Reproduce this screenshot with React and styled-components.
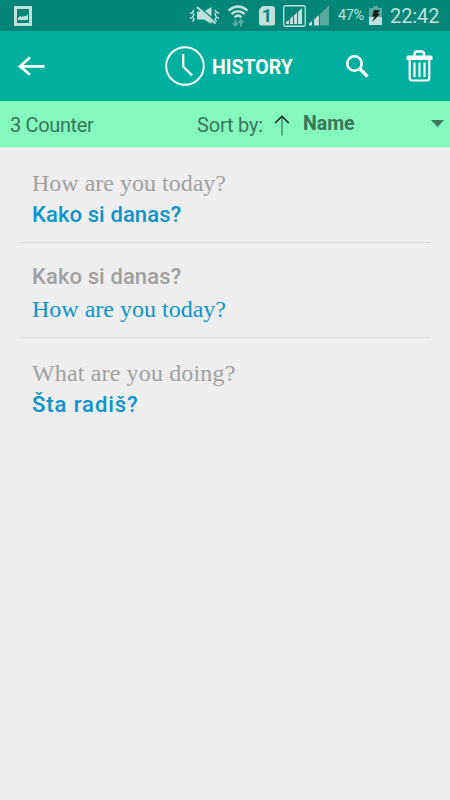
import React from 'react';
import styled, { createGlobalStyle } from 'styled-components';

const GlobalStyle = createGlobalStyle`
  * {
    box-sizing: border-box;
  }

  body {
    margin: 0;
    background-color: #eeeeee;
    font-family: Roboto, sans-serif;
  }
`;

const AppContainer = styled.div`
  display: flex;
  flex-direction: column;
  height: 800px;
  overflow: hidden;
  background-color: #eeeeee;
`;

const StatusBar = styled.div`
  display: flex;
  justify-content: space-between;
  height: 31px;
  padding: 0 10px 0 14px;
  background-color: #048577;
  color: #bfe0dc;
`;

const StatusGroup = styled.div`
  display: flex;
  align-items: center;
`;

const StatusIcon = styled.svg`
  display: block;
  flex: none;
  margin-right: ${props => props.$gap || 0}px;
`;

const Battery = styled.span`
  width: 28px;
  margin-right: 3px;
  font-size: 14.5px;
  letter-spacing: -0.35px;
  white-space: nowrap;
`;

const Clock = styled.span`
  width: 50px;
  font-size: 20px;
  letter-spacing: -0.1px;
  white-space: nowrap;
`;

const Toolbar = styled.header`
  display: flex;
  align-items: center;
  height: 70px;
  padding: 0 17px 0 18px;
  background-color: #00b09f;
`;

const ToolbarTitle = styled.div`
  display: flex;
  align-items: center;
  margin-left: 120px;
`;

const Title = styled.h1`
  width: 84px;
  margin: 2px 0 0 7px;
  color: white;
  font-size: 19.5px;
  font-weight: 700;
  white-space: nowrap;
`;

const ToolbarActions = styled.div`
  display: flex;
  align-items: center;
  margin-left: auto;
`;

const IconButton = styled.button`
  display: block;
  margin: 0 0 0 ${props => props.$gap || 0}px;
  padding: 0;
  border: none;
  background: none;
  color: white;

  svg {
    display: block;
  }
`;

const SortBar = styled.div`
  display: flex;
  align-items: center;
  height: 47px;
  padding: 2px 6px 0 10px;
  border-bottom: 1px solid #c4f2d9;
  background-color: #84f9be;
  color: #3a7658;
  font-size: 20px;
`;

const Counter = styled.span`
  width: 187px;
  letter-spacing: -0.35px;
`;

const SortLabel = styled.span`
  width: 77px;
  letter-spacing: -0.2px;
  white-space: nowrap;
`;

const SortSelect = styled.div`
  display: flex;
  flex: 1;
  align-items: center;
  justify-content: space-between;
  margin: -3px 0 0 13px;
  font-size: 19.5px;
  font-weight: 700;
`;

const List = styled.ul`
  margin: 0;
  padding: 0 20px;
  list-style: none;
`;

const Entry = styled.li`
  height: 95px;
  padding: ${props => props.$top}px 12px 0;
  border-bottom: 1px solid #dadada;

  &:last-child {
    border-bottom: none;
  }
`;

const Phrase = styled.div`
  color: ${props => (props.$translated ? '#0b94cb' : '#a0a0a0')};
  font-family: 'Liberation Serif', serif;
  font-size: 24px;
  line-height: 31px;
  letter-spacing: ${props => props.$spacing || 0}px;
  white-space: nowrap;
`;

const RoundPhrase = styled(Phrase)`
  font-family: Roboto, sans-serif;
  font-size: 22px;
  font-weight: 500;
  line-height: 32px;
  padding-bottom: 1px;
`;

const history = [
  { source: 'How are you today?', target: 'Kako si danas?', top: 20, targetSpacing: 0.1 },
  { source: 'Kako si danas?', target: 'How are you today?', reversed: true, top: 18, sourceSpacing: 0.1 },
  { source: 'What are you doing?', target: 'Šta radiš?', top: 20, sourceSpacing: 0.15, targetSpacing: 0.95 },
];

function PictureIcon() {
  return (
    <StatusIcon width="18" height="20" viewBox="0 0 18 20">
      <path fill="currentColor" fillRule="evenodd" d="M0 0h18v20H0zM3 3v14h12V3z" />
      <path fill="currentColor" d="M4 14v-2l2-2 2 1 2-1 2 0 2-2v6z" />
    </StatusIcon>
  );
}

function MuteIcon() {
  return (
    <StatusIcon width="29" height="20" viewBox="0 0 29 20" $gap={8}>
      <path fill="currentColor" d="M7 5.500h7L21.500 1v17L14 13.500H7z" />
      <path stroke="#048577" strokeWidth="1.500" d="M9 .5l17 15" />
      <path stroke="currentColor" strokeWidth="2.200" d="M7 1l18.500 16.500" />
      <path
        fill="none"
        stroke="currentColor"
        strokeWidth="1.4"
        d="M4 4L2.500 6 4 8.500 2.500 11 4 13.500 2.500 15.500M.8 6v2M.8 11v2M25 4l1.500 2L25 8.500l1.500 2.500L25 13.500l1.500 2M28.200 6v2M28.200 11v2"
      />
    </StatusIcon>
  );
}

function WifiIcon() {
  return (
    <StatusIcon width="22" height="22" viewBox="0 0 22 22" $gap={10}>
      <g fill="none" stroke="currentColor" strokeWidth="2.5">
        <path d="M1.500 5.500Q11-2.500 20.500 5.500" />
        <path d="M4.500 9Q11 3.500 17.500 9" />
        <path d="M7.500 12.300Q11 9 14.500 12.300" />
      </g>
      <g fill="none" stroke="#5aada3" strokeWidth="1.8">
        <path d="M8.500 14.500v6.500M6 18l2.500 2.500L11 18M14 21.500V15M11.500 17.500L14 15l2.500 2.500" />
      </g>
    </StatusIcon>
  );
}

const SimCard = styled.span`
  display: flex;
  align-items: center;
  justify-content: center;
  width: 16px;
  height: 20px;
  margin-right: 8px;
  border-radius: 3px;
  background-color: #bfe0dc;
  clip-path: polygon(4px 0, 100% 0, 100% 100%, 0 100%, 0 4px);
  color: #048577;
  font-size: 18px;
  font-weight: 700;
`;

function BoxedSignalIcon() {
  return (
    <StatusIcon width="23" height="22" viewBox="0 0 23 22" $gap={3}>
      <rect x="0.75" y="0.75" width="21.500" height="20.500" rx="1.500" fill="none" stroke="currentColor" strokeWidth="1.3" />
      <path fill="currentColor" d="M3 19v-2l3-2v4zM7 19v-5l3-3v8zM11 19v-8.500l3-3V19zM15 19V7l4-4v16z" />
    </StatusIcon>
  );
}

function SignalIcon() {
  return (
    <StatusIcon width="22" height="21" viewBox="0 0 22 21" $gap={7}>
      <path fill="currentColor" d="M0 20.500v-2l3-2.500v4.500zM5 20.500v-6l5-4.500v10.500z" />
      <path fill="#55a99f" d="M11 20.500V9L20 .5v20z" />
    </StatusIcon>
  );
}

function BatteryIcon() {
  return (
    <StatusIcon width="13" height="19" viewBox="0 0 13 19" $gap={8}>
      <path fill="#59aaa1" d="M4 0h5v2h4v9H0V2h4z" />
      <path fill="currentColor" d="M0 11h13v8H0z" />
      <path fill="#10201e" d="M5 4h6L8.500 8H11l-8 8 2.500-5.500H3z" />
    </StatusIcon>
  );
}

function BackIcon() {
  return (
    <svg width="27" height="20" viewBox="0 0 27 20" fill="none" stroke="currentColor" strokeWidth="2.8">
      <path d="M26.500 10.300H2M12 1.500L2 10.300l10 8.400" />
    </svg>
  );
}

function HistoryIcon() {
  return (
    <svg width="40" height="40" viewBox="0 0 40 40" fill="none" stroke="white">
      <circle cx="20" cy="20" r="18.800" strokeWidth="1.9" />
      <path strokeWidth="2.300" d="M18.200 8v12.500l9 9" />
    </svg>
  );
}

function SearchIcon() {
  return (
    <svg width="23" height="23" viewBox="0 0 23 23" fill="none" stroke="currentColor">
      <circle cx="8.500" cy="8.500" r="7.200" strokeWidth="2.600" />
      <path strokeWidth="3.200" d="M13.500 13.500l8 8" />
    </svg>
  );
}

function TrashIcon() {
  return (
    <svg width="27" height="32" viewBox="0 0 27 32" fill="none" stroke="currentColor">
      <path strokeWidth="2.400" d="M8.500 6V4.500Q8.500 1.500 11 1.500h4.500Q18 1.500 18 4.500V6" />
      <path fill="currentColor" stroke="none" d="M2 5.500h23q1.500 0 1.500 1.500v3H.5V7Q.5 5.500 2 5.500z" />
      <path strokeWidth="2.200" d="M3.700 9v19q0 2.500 2.500 2.500h14.600q2.500 0 2.500-2.500V9" />
      <path strokeWidth="2.100" d="M8.500 12.500v14.500M13.500 12.500v14.500M18.500 12.500v14.500" />
    </svg>
  );
}

function SortArrow() {
  return (
    <svg width="16" height="21" viewBox="0 0 16 21" fill="none">
      <path stroke="#3a7658" strokeWidth="1.2" d="M8 1v19.500" />
      <path stroke="#0a1a12" strokeWidth="1.5" d="M1.200 8L8 1.200 14.800 8" />
    </svg>
  );
}

function HistoryEntry({ source, target, reversed, top, sourceSpacing, targetSpacing }) {
  const Source = reversed ? RoundPhrase : Phrase;
  const Target = reversed ? Phrase : RoundPhrase;

  return (
    <Entry $top={top}>
      <Source $spacing={sourceSpacing}>{source}</Source>
      <Target $translated $spacing={targetSpacing}>{target}</Target>
    </Entry>
  );
}

function App() {
  return (
    <AppContainer>
      <GlobalStyle />
      <StatusBar>
        <StatusGroup>
          <PictureIcon />
        </StatusGroup>
        <StatusGroup>
          <MuteIcon />
          <WifiIcon />
          <SimCard>1</SimCard>
          <BoxedSignalIcon />
          <SignalIcon />
          <Battery>47%</Battery>
          <BatteryIcon />
          <Clock>22:42</Clock>
        </StatusGroup>
      </StatusBar>

      <Toolbar>
        <IconButton aria-label="Back">
          <BackIcon />
        </IconButton>
        <ToolbarTitle>
          <HistoryIcon />
          <Title>HISTORY</Title>
        </ToolbarTitle>
        <ToolbarActions>
          <IconButton aria-label="Search">
            <SearchIcon />
          </IconButton>
          <IconButton aria-label="Delete" $gap={37}>
            <TrashIcon />
          </IconButton>
        </ToolbarActions>
      </Toolbar>

      <SortBar>
        <Counter>3 Counter</Counter>
        <SortLabel>Sort by:</SortLabel>
        <SortArrow />
        <SortSelect>
          Name
          <svg width="13" height="7" viewBox="0 0 13 7">
            <path fill="#3a7658" d="M0 0h13L6.500 7z" />
          </svg>
        </SortSelect>
      </SortBar>

      <List>
        {history.map(entry => (
          <HistoryEntry key={entry.source} {...entry} />
        ))}
      </List>
    </AppContainer>
  );
}

export default App;
